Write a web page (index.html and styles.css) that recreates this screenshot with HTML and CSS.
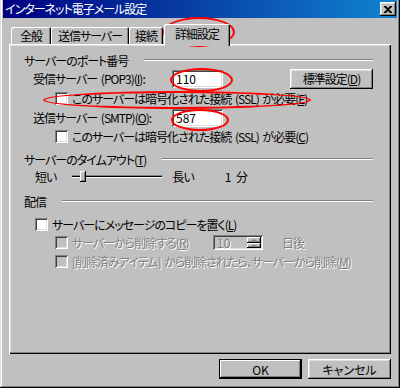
FILE: index.html
```html
<!DOCTYPE html>
<html lang="ja">
<head>
  <meta charset="UTF-8" />
  <title>インターネット電子メール設定</title>
  <link rel="stylesheet" href="styles.css">
</head>
<body>
  <div class="window">
    <div class="titlebar">
      <span class="title">インターネット電子メール設定</span>
      <span class="close">
        <svg width="8" height="7" viewBox="0 0 8 7"><path d="M0 0h2l2 2 2-2h2v1L5 3.5 8 6v1H6L4 5 2 7H0V6l3-2.5L0 1z" fill="#000"/></svg>
      </span>
    </div>

    <div class="tabs">
      <div class="tab w-general">全般</div>
      <div class="tab w-smtp">送信サーバー</div>
      <div class="tab w-conn">接続</div>
      <div class="tab active w-adv">詳細設定</div>
    </div>

    <div class="panel">
      <div class="group-title"><span>サーバーのポート番号</span><i class="rule"></i></div>

      <div class="row port-row">
        <span class="field-label">受信サーバー (POP3)(<u>I</u>):</span>
        <span class="textbox">110</span>
        <span class="btn std-btn">標準設定(<u>D</u>)</span>
      </div>
      <div class="row check-row deep ssl1">
        <span class="check"></span>
        <span>このサーバーは暗号化された接続 (SSL) が必要(<u>E</u>)</span>
      </div>
      <div class="row port-row smtp">
        <span class="field-label">送信サーバー (SMTP)(<u>O</u>):</span>
        <span class="textbox">587</span>
      </div>
      <div class="row check-row deep ssl2">
        <span class="check"></span>
        <span>このサーバーは暗号化された接続 (SSL) が必要(<u>C</u>)</span>
      </div>

      <div class="group-title gt-timeout"><span>サーバーのタイムアウト(<u>T</u>)</span><i class="rule"></i></div>
      <div class="row slider-row">
        <span>短い</span>
        <div class="slider"><span class="track"></span><span class="thumb"></span></div>
        <span class="long">長い</span>
        <span class="slider-value">1 分</span>
      </div>

      <div class="group-title gt-delivery"><span>配信</span><i class="rule"></i></div>
      <div class="row check-row copy-row">
        <span class="check"></span>
        <span>サーバーにメッセージのコピーを置く(<u>L</u>)</span>
      </div>
      <div class="row check-row deep disabled delete-row">
        <span class="check"></span>
        <span class="delete-label">サーバーから削除する(<u>R</u>)</span>
        <span class="spin">
          <span class="spin-text">10</span>
          <span class="spin-btns"><i class="arrow up"></i><i class="arrow down"></i></span>
        </span>
        <span class="days">日後</span>
      </div>
      <div class="row check-row deep disabled items-row">
        <span class="check"></span>
        <span>[削除済みアイテム] から削除されたら、サーバーから削除(<u>M</u>)</span>
      </div>
    </div>

    <div class="footer">
      <span class="btn default">OK</span>
      <span class="btn">キャンセル</span>
    </div>

    <!-- red annotation marks -->
    <div class="mark mark-tab"></div>
    <div class="mark mark-pop3"></div>
    <div class="mark mark-ssl"></div>
    <div class="mark mark-smtp"></div>
  </div>
</body>
</html>
```

FILE: styles.css
```css
* {
  box-sizing: border-box;
}
body {
  margin: 0;
  background: #c0c0c0;
  font-family: "Noto Sans CJK JP", "Noto Sans", sans-serif;
  font-size: 12px;
  font-feature-settings: "palt";
  letter-spacing: -1px;
  word-spacing: 2px;
  color: #000;
}
u {
  text-decoration: underline;
  text-underline-offset: 1px;
}
.window {
  position: relative;
  width: 400px;
  height: 388px;
  padding: 0 3px 3px;
  background: #c0c0c0;
  box-shadow: inset -1px -1px #000, inset 1px 0 #dfdfdf, inset -2px -2px #808080, inset 2px 0 #fff;
}

/* title bar */
.titlebar {
  height: 18px;
  display: flex;
  align-items: center;
  justify-content: space-between;
  padding: 0 1px 0 2px;
  background: linear-gradient(to right, #000080, #1084d0);
  color: #fff;
}
.title {
  line-height: 18px;
}
.close {
  width: 16px;
  height: 14px;
  display: flex;
  align-items: center;
  justify-content: center;
  background: #c0c0c0;
  box-shadow: inset -1px -1px #000, inset 1px 1px #fff, inset -2px -2px #808080, inset 2px 2px #dfdfdf;
}

/* tabs */
.tabs {
  display: flex;
  align-items: flex-end;
  height: 20px;
  margin: 6px 0 0 8px;
}
.tab {
  height: 17px;
  display: flex;
  align-items: center;
  justify-content: center;
  border-radius: 2px 2px 0 0;
  box-shadow: inset 1px 1px #fff, inset -1px 0 #000, inset -2px 0 #808080;
}
.tab.active {
  position: relative;
  z-index: 1;
  height: 22px;
  margin-bottom: -2px;
  padding-bottom: 4px;
  background: #c0c0c0;
}
.w-general { width: 40px; }
.w-smtp { width: 78px; }
.w-conn { width: 34px; }
.w-adv { width: 66px; margin-left: 1px; }

/* tab page */
.panel {
  height: 310px;
  margin: 0 6px;
  padding: 8px 18px 0 15px;
  box-shadow: inset 1px 1px #fff, inset -1px -1px #000, inset -2px -2px #808080, inset 2px 2px #dfdfdf;
}
.group-title {
  display: flex;
  align-items: center;
  height: 16px;
}
.group-title .rule {
  flex: 1;
  height: 2px;
  margin-left: 16px;
  border-top: 1px solid #808080;
  border-bottom: 1px solid #fff;
}
.gt-timeout { margin-top: 6px; }
.gt-delivery { margin-top: 8px; }

.row {
  display: flex;
  align-items: center;
}
.port-row {
  height: 21px;
  padding-left: 9px;
}
.field-label {
  width: 139px;
}
.textbox {
  width: 51px;
  height: 18px;
  padding: 1px 4px 0;
  line-height: 16px;
  letter-spacing: 0;
  background: #fff;
  box-shadow: inset 1px 1px #808080, inset -1px -1px #fff, inset 2px 2px #404040, inset -2px -2px #dfdfdf;
}
.btn {
  display: inline-flex;
  align-items: center;
  justify-content: center;
  width: 83px;
  height: 20px;
  background: #c0c0c0;
  box-shadow: inset -1px -1px #000, inset 1px 1px #fff, inset -2px -2px #808080, inset 2px 2px #dfdfdf;
}
.std-btn {
  margin-left: 67px;
}

.check-row {
  gap: 4px;
  padding-left: 11px;
}
.check-row.deep {
  padding-left: 31px;
}
.check {
  width: 13px;
  height: 13px;
  flex: none;
  background: #fff;
  box-shadow: inset 1px 1px #808080, inset -1px -1px #fff, inset 2px 2px #404040, inset -2px -2px #dfdfdf;
}
.ssl1 { height: 18px; }
.ssl2 { height: 17px; }
.copy-row {
  height: 18px;
  margin-top: 6px;
}
.delete-row { height: 19px; }
.items-row { height: 19px; }

.disabled {
  color: #808080;
  text-shadow: 1px 1px #fff;
}
.disabled .check {
  background: #c0c0c0;
}
.delete-label {
  width: 137px;
}
.spin {
  display: flex;
  width: 50px;
  height: 15px;
  padding: 2px;
  letter-spacing: 0;
  box-shadow: inset 1px 1px #808080, inset -1px -1px #fff, inset 2px 2px #404040, inset -2px -2px #dfdfdf;
}
.spin-text {
  flex: 1;
  line-height: 11px;
  padding-left: 2px;
}
.spin-btns {
  display: flex;
  flex-direction: column;
  width: 14px;
}
.spin-btns .arrow {
  flex: 1;
  position: relative;
  box-shadow: inset -1px -1px #000, inset 1px 1px #fff, inset -2px -2px #808080;
}
.arrow::after {
  content: "";
  position: absolute;
  left: 4px;
  top: 2px;
  border-left: 3px solid transparent;
  border-right: 3px solid transparent;
}
.arrow.up::after {
  border-bottom: 2px solid #808080;
}
.arrow.down::after {
  border-top: 2px solid #808080;
}
.days {
  margin-left: 15px;
}

/* timeout slider */
.slider-row {
  height: 18px;
  padding-left: 11px;
}
.slider {
  position: relative;
  width: 90px;
  height: 18px;
  margin-left: 16px;
  display: flex;
  align-items: center;
}
.track {
  width: 100%;
  height: 3px;
  background: #000;
  border-top: 1px solid #808080;
  border-bottom: 1px solid #fff;
}
.thumb {
  position: absolute;
  left: 8px;
  top: 4px;
  width: 6px;
  height: 11px;
  background: #c0c0c0;
  box-shadow: inset -1px -1px #000, inset 1px 1px #fff, inset -2px -2px #808080;
}
.long {
  margin-left: 10px;
}
.slider-value {
  margin-left: 31px;
  letter-spacing: 0;
}

/* bottom buttons */
.footer {
  display: flex;
  justify-content: flex-end;
  gap: 6px;
  margin: 5px 6px 0 0;
  letter-spacing: 0;
}
.btn.default {
  box-shadow: inset 0 0 0 1px #000, inset -2px -2px #000, inset 2px 2px #fff, inset -3px -3px #808080;
}

/* red annotation ellipses */
.mark {
  position: absolute;
  border: 2px solid #f00;
  border-radius: 50%;
  pointer-events: none;
}
.mark-tab { left: 163px; top: 17px; width: 72px; height: 30px; }
.mark-pop3 { left: 170px; top: 68px; width: 63px; height: 24px; }
.mark-ssl { left: 43px; top: 91px; width: 268px; height: 18px; }
.mark-smtp { left: 171px; top: 109px; width: 58px; height: 22px; }
```
